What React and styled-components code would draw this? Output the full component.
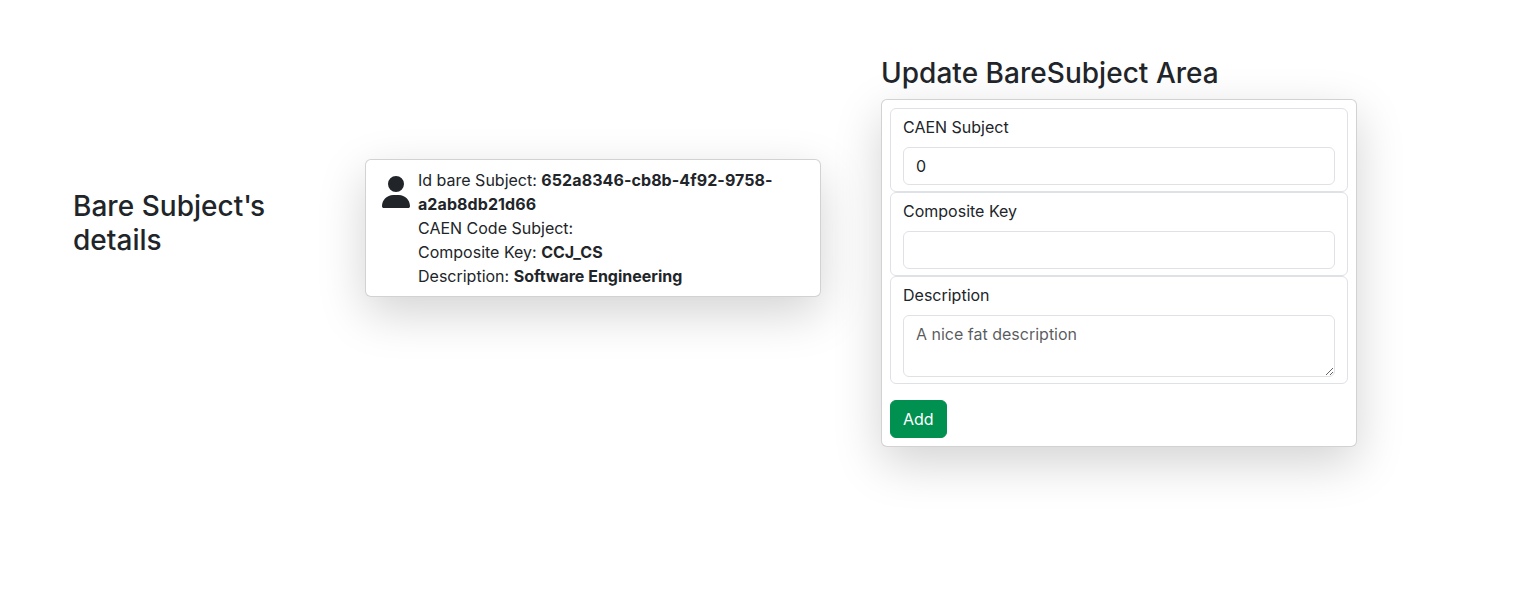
import React from "react";
import styled, { createGlobalStyle } from "styled-components";

const GlobalStyle = createGlobalStyle`
  *, *::before, *::after { box-sizing: border-box; }
  body {
    margin: 0;
    font-family: Inter, "Liberation Sans", sans-serif;
    font-size: 16px;
    line-height: 1.5;
    color: #212529;
    background: #fff;
  }
`;

const Page = styled.main`
  display: flex;
  align-items: flex-start;
  height: 593px;
  overflow: hidden;
`;

const Intro = styled.header`
  width: 220px;
  margin: 190px 72px 0 73px;
`;

const Title = styled.h3`
  margin: 0 0 8px;
  font-size: 28px;
  font-weight: 500;
  line-height: 1.2;
  letter-spacing: 0.03px;
`;

const Apostrophe = styled.span`
  letter-spacing: -2px;
`;

const Card = styled.section`
  border: 1px solid rgba(0, 0, 0, 0.176);
  border-radius: 6px;
  background: #fff;
  box-shadow: 0 16px 48px rgba(0, 0, 0, 0.175);
`;

const DetailsCard = styled(Card)`
  display: flex;
  width: 456px;
  height: 138px;
  margin: 159px 60px 0 0;
  padding: 8px 16px;
`;

const PersonIcon = styled.svg`
  flex: none;
  width: 28px;
  height: 32px;
  margin: 8px 8px 0 0;
`;

const Details = styled.div`
  min-width: 0;
`;

const Identifier = styled.b`
  letter-spacing: 0.08px;
`;

const FormArea = styled.div`
  width: 476px;
  padding-top: 57px;
`;

const FormCard = styled(Card).attrs({ as: "form" })`
  display: block;
  height: 348px;
  margin-top: 8px;
  padding: 8px;
`;

const Field = styled.div`
  height: ${(p) => p.$height}px;
  padding: 6px 12px;
  border: 1px solid #dee2e6;
  border-radius: 6px;
`;

const Label = styled.label`
  display: block;
  margin-bottom: 8px;
`;

const Input = styled.input`
  display: block;
  width: 100%;
  height: 38px;
  padding: 6px 12px;
  border: 1px solid #dee2e6;
  border-radius: 6px;
  background: #fff;
  color: #212529;
  font: inherit;
`;

const TextArea = styled.textarea`
  display: block;
  width: 100%;
  height: 62px;
  min-height: 38px;
  padding: 6px 12px;
  border: 1px solid #dee2e6;
  border-radius: 6px;
  background: #fff;
  color: #212529;
  font: inherit;
  resize: vertical;

  &::placeholder { color: rgba(33, 37, 41, 0.75); }
`;

const AddButton = styled.button`
  display: block;
  height: 38px;
  margin-top: 16px;
  padding: 6px 12px;
  border: 1px solid #009150;
  border-radius: 6px;
  background: #009150;
  color: #fff;
  font: inherit;
`;

export default function App() {
  return (
    <>
      <GlobalStyle />
      <Page>
        <Intro>
          <Title>Bare Subject<Apostrophe>'</Apostrophe>s details</Title>
        </Intro>
        <DetailsCard>
          <PersonIcon viewBox="0 0 448 512" fill="currentColor" aria-hidden="true">
            <path d="M224 256A128 128 0 1 0 224 0a128 128 0 1 0 0 256zm-45.7 48C79.8 304 0 383.8 0 482.3C0 498.7 13.3 512 29.7 512H418.3c16.4 0 29.7-13.3 29.7-29.7C448 383.8 368.2 304 269.7 304H178.3z" />
          </PersonIcon>
          <Details>
            <div>Id bare Subject: <Identifier>652a8346-cb8b-4f92-9758-a2ab8db21d66</Identifier></div>
            <div>CAEN Code Subject:</div>
            <div>Composite Key: <b>CCJ_CS</b></div>
            <div>Description: <b>Software Engineering</b></div>
          </Details>
        </DetailsCard>
        <FormArea>
          <Title>Update BareSubject Area</Title>
          <FormCard>
            <Field $height={84}>
              <Label htmlFor="caen">CAEN Subject</Label>
              <Input id="caen" type="number" defaultValue="0" />
            </Field>
            <Field $height={84}>
              <Label htmlFor="key">Composite Key</Label>
              <Input id="key" />
            </Field>
            <Field $height={108}>
              <Label htmlFor="description">Description</Label>
              <TextArea id="description" placeholder="A nice fat description" />
            </Field>
            <AddButton type="button">Add</AddButton>
          </FormCard>
        </FormArea>
      </Page>
    </>
  );
}
